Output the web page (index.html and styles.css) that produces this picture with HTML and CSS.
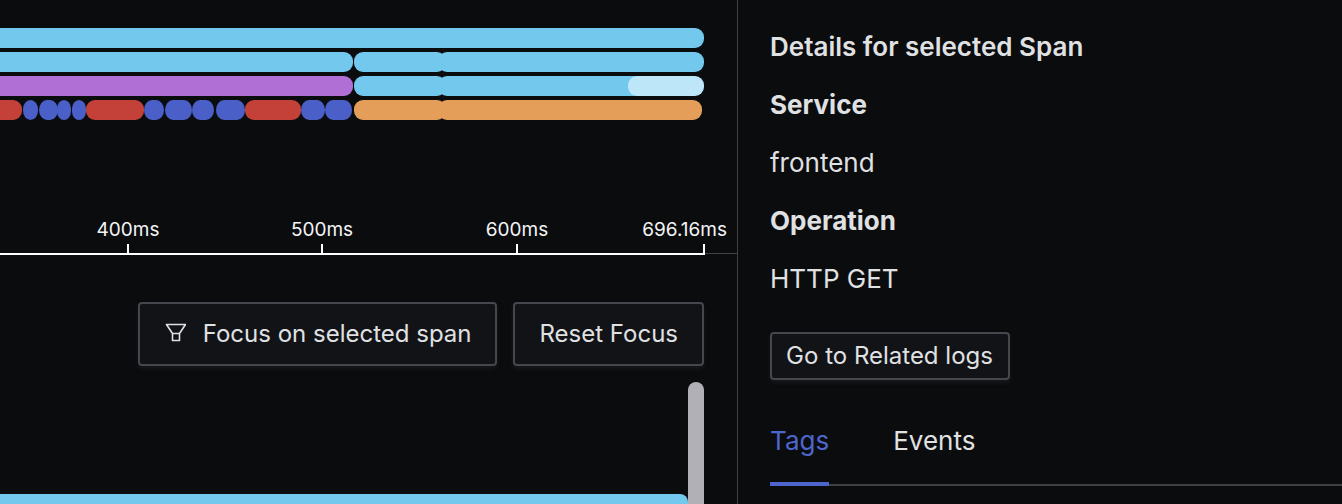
FILE: index.html
```html
<!DOCTYPE html>
<html lang="en">
<head>
<meta charset="utf-8">
<title>Trace details</title>
<link rel="stylesheet" href="styles.css">
</head>
<body>
<main class="layout">
  <section class="trace">
    <div class="flame">
      <div class="row"><div class="seg sky" style="width:714px"></div></div>
      <div class="row">
        <div class="seg sky" style="width:363px"></div>
        <div class="seg sky" style="width:92px"></div>
        <div class="seg sky overlap" style="width:266px"></div>
      </div>
      <div class="row">
        <div class="seg purple" style="width:363px"></div>
        <div class="seg sky" style="width:92px"></div>
        <div class="seg sky overlap" style="width:206px"></div>
        <div class="seg pale overlap-pale" style="width:76px"></div>
      </div>
      <div class="row row-inset">
        <div class="seg red" style="width:32px"></div>
        <div class="seg blue nudge" style="width:15px"></div>
        <div class="seg blue nudge" style="width:19px"></div>
        <div class="seg blue tuck" style="width:14px"></div>
        <div class="seg blue nudge" style="width:14px"></div>
        <div class="seg red" style="width:58px"></div>
        <div class="seg blue" style="width:20px"></div>
        <div class="seg blue nudge" style="width:27px"></div>
        <div class="seg blue" style="width:22px"></div>
        <div class="seg blue nudge-wide" style="width:29px"></div>
        <div class="seg red" style="width:56px"></div>
        <div class="seg blue" style="width:24px"></div>
        <div class="seg blue" style="width:27px"></div>
        <div class="seg orange join-left" style="width:92px"></div>
        <div class="seg orange overlap" style="width:264px"></div>
      </div>
    </div>
    <div class="axis">
      <div class="tick" style="left:128px"><span class="tick-label">400ms</span></div>
      <div class="tick" style="left:322px"><span class="tick-label">500ms</span></div>
      <div class="tick" style="left:517px"><span class="tick-label">600ms</span></div>
      <div class="tick tick-end" style="left:704px"><span class="tick-label">696.16ms</span></div>
    </div>
    <div class="actions">
      <button class="btn btn-large" type="button">
        <svg class="btn-icon" viewBox="-1 0 22 20" width="22" height="20" aria-hidden="true">
          <path d="M1.5 1.5H20.5L14.5 10.5H7.5Z M7.5 10.5V17.5H14.5V10.5" fill="none" stroke="currentColor" stroke-width="1.6" stroke-linejoin="round"/>
        </svg>
        Focus on selected span
      </button>
      <button class="btn btn-large btn-reset" type="button">Reset Focus</button>
    </div>
    <div class="lower">
      <div class="lower-bar"></div>
      <div class="scrollbar"></div>
    </div>
  </section>
  <aside class="details">
    <h2 class="line heading">Details for selected Span</h2>
    <h3 class="line strong">Service</h3>
    <p class="line">frontend</p>
    <h3 class="line strong">Operation</h3>
    <p class="line">HTTP GET</p>
    <button class="btn btn-small" type="button">Go to Related logs</button>
    <nav class="tabs">
      <a class="tab tab-active">Tags</a>
      <a class="tab">Events</a>
    </nav>
  </aside>
</main>
</body>
</html>
```

FILE: styles.css
```css
* { box-sizing: border-box; }
html, body { margin: 0; height: 100%; overflow: hidden; background: #0a0c0e; }
body { font-family: Inter, "Liberation Sans", sans-serif; color: #e0e1e3; }

.layout { display: flex; height: 504px; }

.trace {
  width: 738px;
  flex: none;
  border-right: 1px solid #3f4145;
  display: flex;
  flex-direction: column;
  padding-top: 28px;
}

.flame { display: flex; flex-direction: column; gap: 4px; width: 704px; }
.row { display: flex; justify-content: flex-end; gap: 1px; height: 20px; overflow: hidden; }
.row-inset { padding-right: 2px; gap: 0; }
.seg { flex: none; height: 20px; border-radius: 9px; }
.sky { background: #73c8ee; }
.purple { background: #b06fd4; }
.pale { background: #bde6f9; }
.red { background: #c4413a; }
.blue { background: #4a60c8; border-radius: 8px / 10px; }
.orange { background: #e59e59; }
.overlap { margin-left: -9px; }
.overlap-pale { margin-left: -17px; }
.row-inset .join-left { margin-left: 2px; }
.row-inset .overlap { margin-left: -8px; }
.nudge { margin-left: 1px; }
.nudge-wide { margin-left: 2px; }
.tuck { margin-left: -1px; }

.axis {
  position: relative;
  height: 134px;
  border-bottom: 1px solid #3f4145;
  flex: none;
}
.axis::before {
  content: "";
  position: absolute;
  left: 0;
  width: 705px;
  bottom: -2px;
  height: 2px;
  background: #fff;
}
.tick {
  position: absolute;
  bottom: 0;
  width: 2px;
  height: 9px;
  margin-left: -1px;
  background: #fff;
}
.tick-label {
  position: absolute;
  bottom: 12px;
  left: 50%;
  transform: translateX(-50%);
  font-size: 19px;
  line-height: 22px;
  color: #f4f4f6;
  white-space: nowrap;
}
.tick-end .tick-label { left: auto; right: -22px; transform: none; }

.actions {
  display: flex;
  justify-content: flex-end;
  gap: 16px;
  width: 704px;
  margin-top: 48px;
  flex: none;
}

.btn {
  display: inline-flex;
  align-items: center;
  justify-content: center;
  font-family: inherit;
  color: #e0e1e3;
  background: #111317;
  border: 2px solid #45474c;
  border-radius: 4px;
  box-shadow: 0 3px 4px rgba(30, 32, 36, 0.6);
}
.btn-large { height: 64px; padding: 0 24px 2px; font-size: 24px; }
.btn-icon { margin-right: 17px; }
.btn-small { width: 240px; height: 48px; padding: 0 1px 2px 0; font-size: 24px; margin-top: 24px; align-self: flex-start; }

.lower { flex: 1; position: relative; width: 704px; overflow: hidden; margin-top: 16px; }
.lower-bar {
  position: absolute;
  left: 0;
  right: 16px;
  top: 112px;
  height: 30px;
  background: #73c8ee;
  border-top-right-radius: 8px;
}
.scrollbar {
  position: absolute;
  right: 0;
  top: 0;
  width: 16px;
  height: 140px;
  background: #b0b0b6;
  border-radius: 8px;
}

.details { flex: 1; padding: 18px 0 0 32px; display: flex; flex-direction: column; }
.line { margin: 0; font-size: 26px; line-height: 58px; font-weight: 400; color: #e0e1e3; }
.heading { font-weight: 600; }
.strong { font-weight: 700; }

.tabs {
  display: flex;
  gap: 64px;
  margin-top: 38px;
  border-bottom: 2px solid #3f4145;
  height: 68px;
}
.tab { font-size: 26px; line-height: 46px; height: 68px; color: #e0e1e3; }
.tab-active { color: #4e66cc; border-bottom: 4px solid #4e66cc; }
```
